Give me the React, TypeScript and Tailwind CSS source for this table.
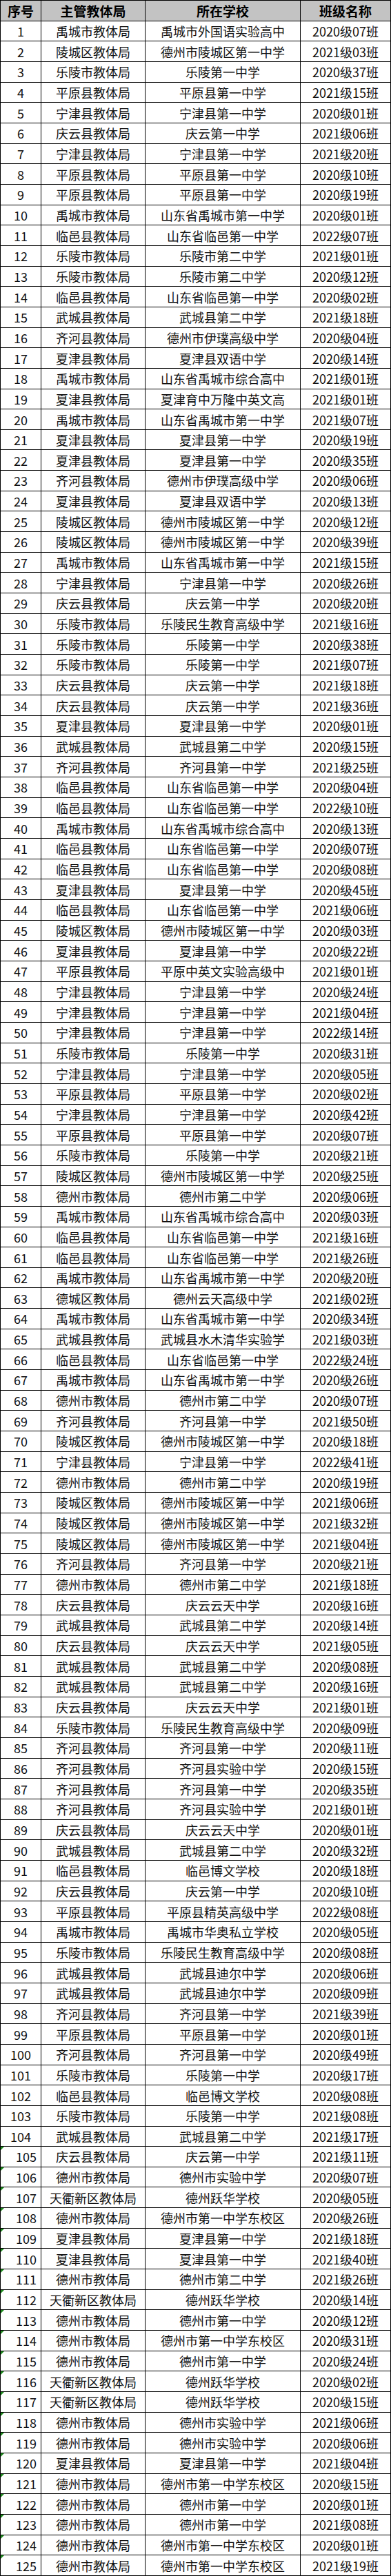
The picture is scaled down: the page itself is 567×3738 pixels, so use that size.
import React from "react";

const raw = `禹城市教体局|禹城市外国语实验高中|2020级07班
陵城区教体局|德州市陵城区第一中学|2021级03班
乐陵市教体局|乐陵第一中学|2020级37班
平原县教体局|平原县第一中学|2021级15班
宁津县教体局|宁津县第一中学|2020级01班
庆云县教体局|庆云第一中学|2021级06班
宁津县教体局|宁津县第一中学|2021级20班
平原县教体局|平原县第一中学|2020级10班
平原县教体局|平原县第一中学|2020级19班
禹城市教体局|山东省禹城市第一中学|2020级01班
临邑县教体局|山东省临邑第一中学|2022级07班
乐陵市教体局|乐陵市第二中学|2021级01班
乐陵市教体局|乐陵市第二中学|2020级12班
临邑县教体局|山东省临邑第一中学|2020级02班
武城县教体局|武城县第二中学|2021级18班
齐河县教体局|德州市伊璞高级中学|2020级04班
夏津县教体局|夏津县双语中学|2020级14班
禹城市教体局|山东省禹城市综合高中|2021级01班
夏津县教体局|夏津育中万隆中英文高|2021级01班
禹城市教体局|山东省禹城市第一中学|2021级07班
夏津县教体局|夏津县第一中学|2020级19班
夏津县教体局|夏津县第一中学|2020级35班
齐河县教体局|德州市伊璞高级中学|2020级06班
夏津县教体局|夏津县双语中学|2020级13班
陵城区教体局|德州市陵城区第一中学|2020级12班
陵城区教体局|德州市陵城区第一中学|2020级39班
禹城市教体局|山东省禹城市第一中学|2021级15班
宁津县教体局|宁津县第一中学|2020级26班
庆云县教体局|庆云第一中学|2020级20班
乐陵市教体局|乐陵民生教育高级中学|2021级16班
乐陵市教体局|乐陵第一中学|2020级38班
乐陵市教体局|乐陵第一中学|2021级07班
庆云县教体局|庆云第一中学|2021级18班
庆云县教体局|庆云第一中学|2021级36班
夏津县教体局|夏津县第一中学|2020级01班
武城县教体局|武城县第二中学|2020级15班
齐河县教体局|齐河县第一中学|2021级25班
临邑县教体局|山东省临邑第一中学|2020级04班
临邑县教体局|山东省临邑第一中学|2022级10班
禹城市教体局|山东省禹城市综合高中|2020级13班
临邑县教体局|山东省临邑第一中学|2020级07班
临邑县教体局|山东省临邑第一中学|2020级08班
夏津县教体局|夏津县第一中学|2020级45班
临邑县教体局|山东省临邑第一中学|2021级06班
陵城区教体局|德州市陵城区第一中学|2020级03班
夏津县教体局|夏津县第一中学|2020级22班
平原县教体局|平原中英文实验高级中|2021级01班
宁津县教体局|宁津县第一中学|2020级24班
宁津县教体局|宁津县第一中学|2021级04班
宁津县教体局|宁津县第一中学|2022级14班
乐陵市教体局|乐陵第一中学|2020级31班
宁津县教体局|宁津县第一中学|2020级05班
平原县教体局|平原县第一中学|2020级02班
宁津县教体局|宁津县第一中学|2020级42班
平原县教体局|平原县第一中学|2020级07班
乐陵市教体局|乐陵第一中学|2020级21班
陵城区教体局|德州市陵城区第一中学|2020级25班
德州市教体局|德州市第二中学|2020级06班
禹城市教体局|山东省禹城市综合高中|2020级03班
临邑县教体局|山东省临邑第一中学|2021级16班
临邑县教体局|山东省临邑第一中学|2021级26班
禹城市教体局|山东省禹城市第一中学|2020级20班
德城区教体局|德州云天高级中学|2021级02班
禹城市教体局|山东省禹城市第一中学|2020级34班
武城县教体局|武城县水木清华实验学|2021级03班
临邑县教体局|山东省临邑第一中学|2022级24班
禹城市教体局|山东省禹城市第一中学|2020级26班
德州市教体局|德州市第二中学|2020级07班
齐河县教体局|齐河县第一中学|2021级50班
陵城区教体局|德州市陵城区第一中学|2020级18班
宁津县教体局|宁津县第一中学|2022级41班
德州市教体局|德州市第二中学|2020级19班
陵城区教体局|德州市陵城区第一中学|2021级06班
陵城区教体局|德州市陵城区第一中学|2021级32班
陵城区教体局|德州市陵城区第一中学|2021级04班
齐河县教体局|齐河县第一中学|2020级21班
德州市教体局|德州市第二中学|2021级18班
庆云县教体局|庆云云天中学|2020级16班
武城县教体局|武城县第二中学|2020级14班
庆云县教体局|庆云云天中学|2021级05班
武城县教体局|武城县第二中学|2020级08班
武城县教体局|武城县第二中学|2020级16班
庆云县教体局|庆云云天中学|2021级01班
乐陵市教体局|乐陵民生教育高级中学|2020级09班
齐河县教体局|齐河县第一中学|2020级11班
齐河县教体局|齐河县实验中学|2020级15班
齐河县教体局|齐河县第一中学|2020级35班
齐河县教体局|齐河县实验中学|2021级01班
庆云县教体局|庆云云天中学|2020级01班
武城县教体局|武城县第二中学|2020级32班
临邑县教体局|临邑博文学校|2020级18班
庆云县教体局|庆云第一中学|2020级10班
平原县教体局|平原县精英高级中学|2022级08班
禹城市教体局|禹城市华奥私立学校|2020级05班
乐陵市教体局|乐陵民生教育高级中学|2020级08班
武城县教体局|武城县迪尔中学|2020级06班
武城县教体局|武城县迪尔中学|2020级09班
齐河县教体局|齐河县第一中学|2021级39班
平原县教体局|平原县第一中学|2020级01班
齐河县教体局|齐河县第一中学|2020级49班
乐陵市教体局|乐陵第一中学|2020级17班
临邑县教体局|临邑博文学校|2020级08班
乐陵市教体局|乐陵第一中学|2021级08班
武城县教体局|武城县第二中学|2021级17班
庆云县教体局|庆云第一中学|2021级11班
德州市教体局|德州市实验中学|2020级07班
天衢新区教体局|德州跃华学校|2020级05班
德州市教体局|德州市第一中学东校区|2020级26班
夏津县教体局|夏津县第一中学|2021级18班
夏津县教体局|夏津县第一中学|2021级40班
德州市教体局|德州市第二中学|2021级26班
天衢新区教体局|德州跃华学校|2020级14班
德州市教体局|德州市第一中学|2020级12班
德州市教体局|德州市第一中学东校区|2020级31班
德州市教体局|德州市第一中学|2020级24班
天衢新区教体局|德州跃华学校|2020级02班
天衢新区教体局|德州跃华学校|2020级15班
德州市教体局|德州市实验中学|2021级06班
德州市教体局|德州市实验中学|2020级06班
夏津县教体局|夏津县第一中学|2021级04班
德州市教体局|德州市第一中学东校区|2020级15班
德州市教体局|德州市第一中学|2020级01班
德州市教体局|德州市第一中学|2021级08班
德州市教体局|德州市第一中学东校区|2020级01班
德州市教体局|德州市第一中学东校区|2021级19班`;

const rows = raw.split("\n").map((l) => l.split("|"));

const cell = "flex items-center justify-center border-r border-b border-black whitespace-nowrap overflow-hidden";

export default function App() {
  return (
    <div className="w-[567px] h-[3738px] bg-white font-['Noto_Sans_CJK_SC','Liberation_Sans',sans-serif] text-[18px] leading-none text-[#111]">
      <div className="grid h-full grid-cols-[59px_151px_225px_131px] grid-rows-[repeat(126,minmax(0,1fr))] border-l border-t border-black">
        {["序号", "主管教体局", "所在学校", "班级名称"].map((h) => (
          <div key={h} className={`${cell} bg-[#c3c3c3] font-bold text-[19px] text-black`}>
            {h}
          </div>
        ))}
        {rows.map((r, i) => {
          const n = i + 1;
          const flagged = n >= 105;
          return (
            <React.Fragment key={n}>
              <div
                className={`relative flex items-center border-r border-b border-black ${
                  flagged ? "justify-end pr-[6px]" : "justify-center"
                }`}
              >
                {flagged && (
                  <span className="absolute left-0 top-0 h-0 w-0 border-t-[5px] border-r-[5px] border-t-[#1e8a1e] border-r-transparent" />
                )}
                {n}
              </div>
              <div className={cell}>{r[0]}</div>
              <div className={cell}>{r[1]}</div>
              <div className={cell}>{r[2]}</div>
            </React.Fragment>
          );
        })}
      </div>
    </div>
  );
}
